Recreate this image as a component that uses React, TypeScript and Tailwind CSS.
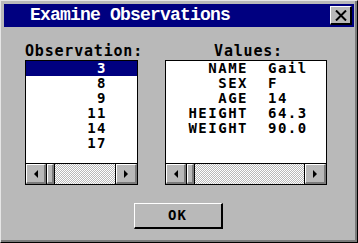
import React from 'react';

const observations = ['3', '8', '9', '11', '14', '17'];

const values: [string, string][] = [
  ['NAME', 'Gail'],
  ['SEX', 'F'],
  ['AGE', '14'],
  ['HEIGHT', '64.3'],
  ['WEIGHT', '90.0'],
];

const mono = "font-['DejaVu_Sans_Mono',monospace] font-bold";

const Arrow = ({ dir }: { dir: 'left' | 'right' }) => (
  <svg width="5" height="8" viewBox="0 0 5 8">
    {dir === 'left' ? <polygon points="5,0 5,8 1,4" fill="#000" /> : <polygon points="0,0 0,8 4,4" fill="#000" />}
  </svg>
);

// raised 3d button face used by the scrollbar parts
const raised =
  'bg-[#b9b9b9] border-t border-l border-t-white border-l-white border-r-2 border-b-2 border-r-[#7b7b7b] border-b-[#7b7b7b]';

const ScrollBar = () => (
  <div className="flex h-[21px] border-t border-black">
    <div className={`w-[20px] flex items-center justify-center ${raised}`}>
      <Arrow dir="left" />
    </div>
    <div className="w-[9px] border-l border-r border-black">
      <div className={`h-full ${raised}`} />
    </div>
    <div className="flex-1 bg-[repeating-conic-gradient(#ffffff_0_25%,#b9b9b9_0_50%)] bg-[length:2px_2px]" />
    <div className="border-l border-black">
      <div className={`w-[21px] h-full flex items-center justify-center ${raised}`}>
        <Arrow dir="right" />
      </div>
    </div>
  </div>
);

export default function App() {
  return (
    <div className="w-[358px] h-[243px] bg-[#b9b9b9] border-t border-l border-t-[#e6e6e6] border-l-[#e6e6e6] border-r border-b border-r-black border-b-black">
      <div className="h-full flex flex-col border-r-2 border-b-2 border-r-[#7b7b7b] border-b-[#7b7b7b]">
        {/* title bar */}
        <div className="mt-[3px] ml-[3px] w-[350px] h-[23px] bg-[#000080] flex items-start">
          <span className="pl-[26px] leading-[23px] text-[18px] tracking-[-0.8px] text-white font-bold font-['Liberation_Mono',monospace] flex-1">
            Examine Observations
          </span>
          <div className="mt-[2px] mr-[2px] w-[22px] h-[19px] bg-[#b9b9b9] border-t border-l border-t-white border-l-white border-r-2 border-b-2 border-r-black border-b-black flex items-center justify-center">
            <svg width="12" height="11" viewBox="0 0 12 11">
              <path d="M1 0.5 L11 10.5 M11 0.5 L1 10.5" stroke="#000" strokeWidth="2" />
            </svg>
          </div>
        </div>

        {/* lists */}
        <div className="flex pl-[24px] pt-[17px] gap-[27px]">
          <div className="w-[113px]">
            <div className={`h-[16px] leading-[15px] text-[15px] tracking-[0.8px] text-black whitespace-nowrap ${mono}`}>
              Observation:
            </div>
            <div className="h-[125px] bg-white border border-black flex flex-col">
              <div className="flex-1">
                {observations.map((o, i) => (
                  <div
                    key={o}
                    className={`h-[15px] leading-[15px] text-[14px] tracking-[1.5px] text-right pr-[30px] ${mono} ${
                      i === 0 ? 'bg-[#000080] text-white' : 'text-black'
                    }`}
                  >
                    {o}
                  </div>
                ))}
              </div>
              <ScrollBar />
            </div>
          </div>

          <div className="w-[162px]">
            <div className={`h-[16px] leading-[15px] text-[15px] tracking-[0.8px] text-black text-center pl-[5px] ${mono}`}>
              Values:
            </div>
            <div className="h-[125px] bg-white border border-black flex flex-col">
              <div className="flex-1 grid grid-cols-[82px_auto] gap-x-[20px] content-start">
                {values.map(([k, v]) => (
                  <React.Fragment key={k}>
                    <div className={`h-[15px] leading-[15px] text-[14px] tracking-[1.5px] text-right text-black ${mono}`}>{k}</div>
                    <div className={`h-[15px] leading-[15px] text-[14px] tracking-[1.5px] text-black ${mono}`}>{v}</div>
                  </React.Fragment>
                ))}
              </div>
              <ScrollBar />
            </div>
          </div>
        </div>

        {/* button */}
        <div className="flex justify-center mt-[18px]">
          <button className={`w-[89px] h-[26px] bg-[#b9b9b9] border-t border-l border-t-white border-l-white border-r-2 border-b-2 border-r-black border-b-black text-[14px] tracking-[1px] text-black ${mono}`}>
            OK
          </button>
        </div>
      </div>
    </div>
  );
}
